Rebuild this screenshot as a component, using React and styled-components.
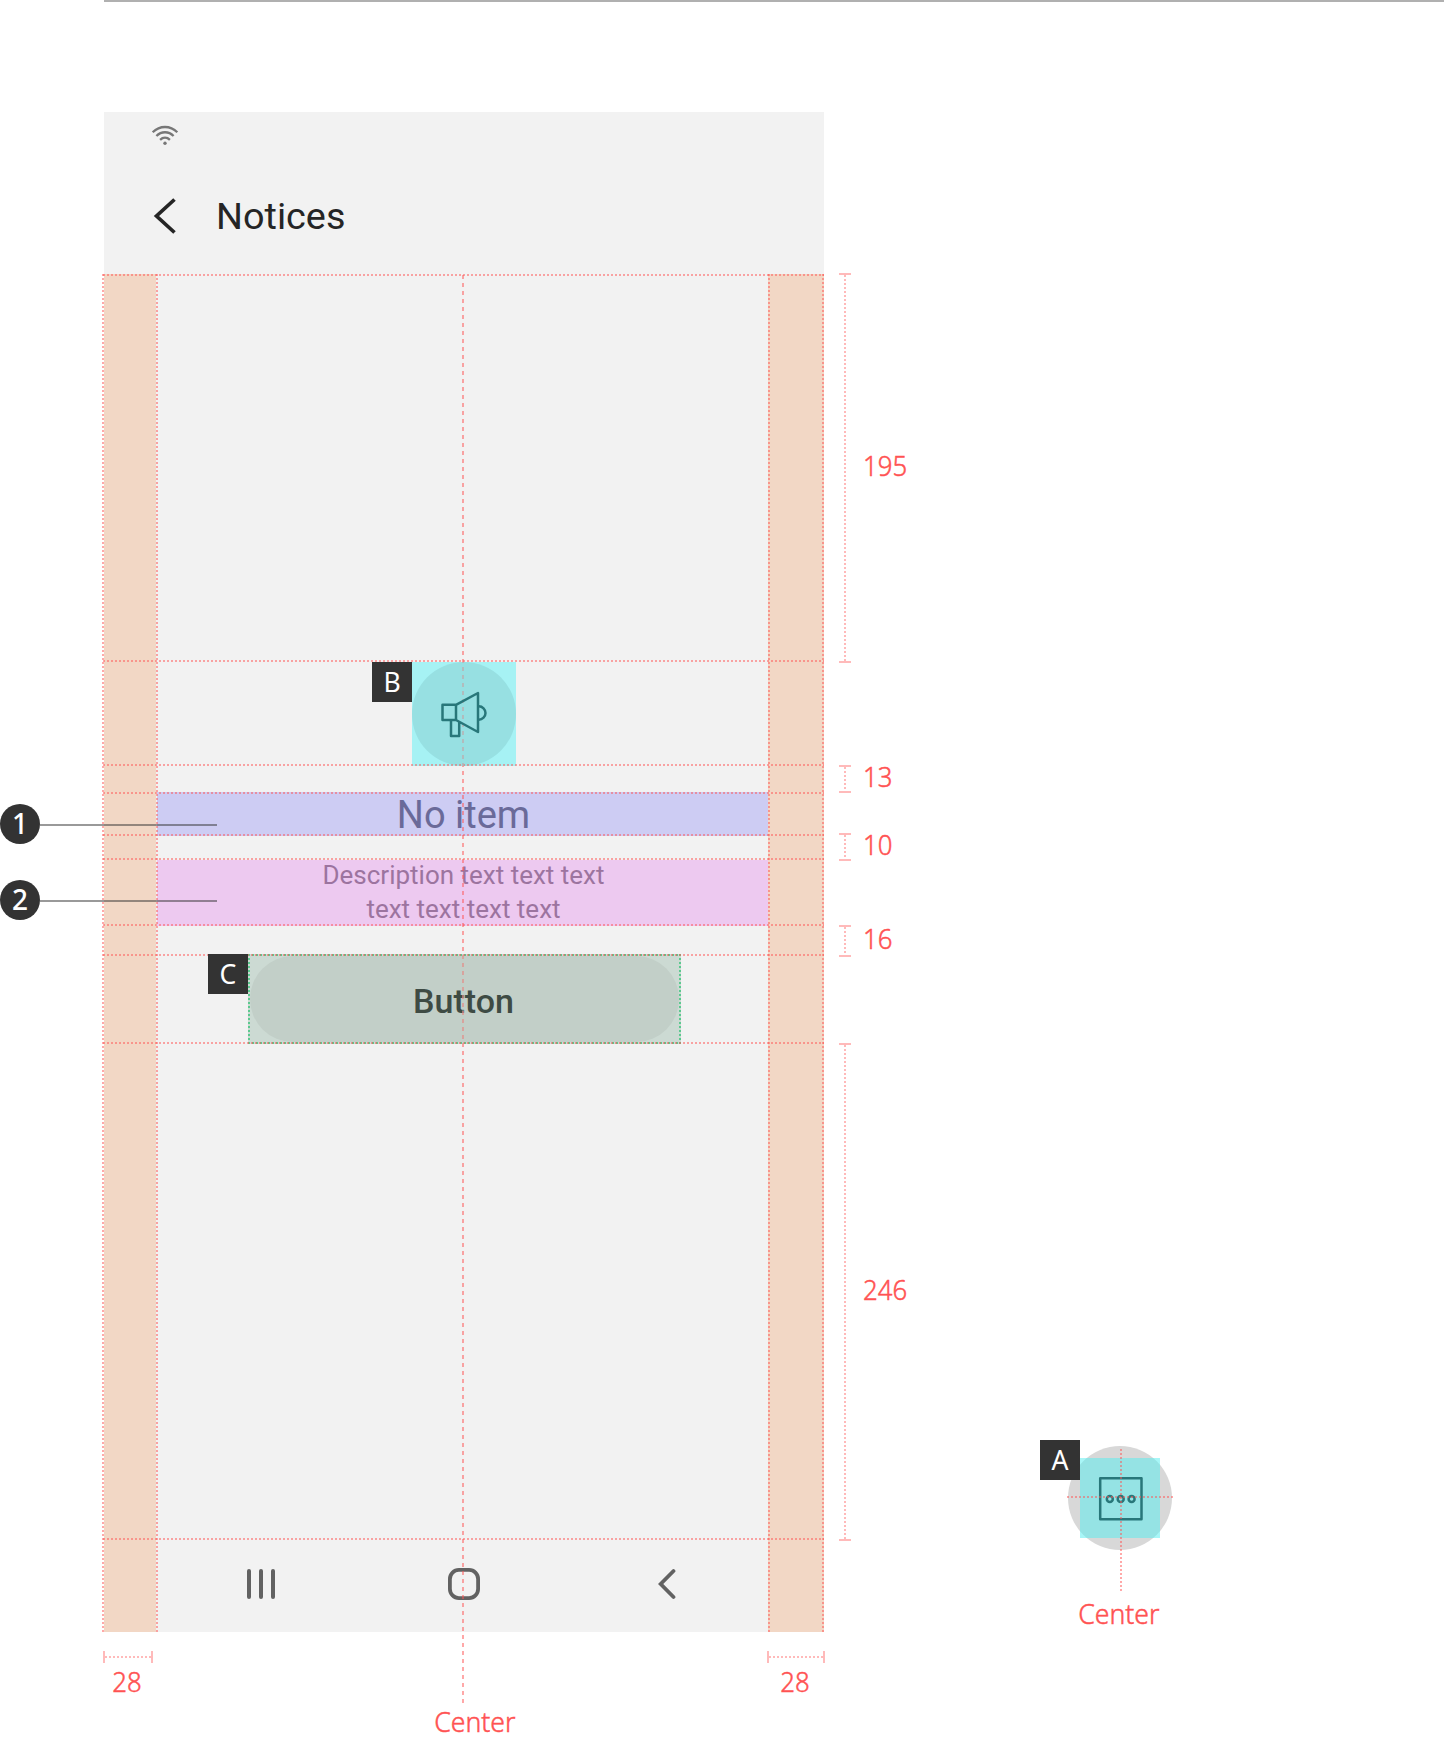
import React from 'react';
import styled, { createGlobalStyle } from 'styled-components';

const RED = 'rgba(255, 82, 82, 0.5)';
const CAP = 'rgba(255, 82, 82, 0.4)';
const GREEN = '#5cc98f';
const dots = (dir, color = RED, on = 2, period = 4) =>
  `repeating-linear-gradient(to ${dir}, ${color} 0 ${on}px, transparent ${on}px ${period}px)`;

const GlobalStyle = createGlobalStyle`
  * { box-sizing: border-box; }
  body { margin: 0; background: #fff; font-family: Roboto, sans-serif; overflow: hidden; }
`;

const Page = styled.div`
  width: 1444px;
  height: 1740px;
  overflow: hidden;
  background: #fff;
`;

const TopRule = styled.div`
  height: 2px;
  margin-left: 104px;
  background: #b0b0b0;
`;

const Board = styled.main`
  display: grid;
  grid-template-columns: 104px 720px 196px 1fr;
  padding-top: 110px;
`;

const Callouts = styled.div`
  display: flex;
  flex-direction: column;
  gap: 36px;
  padding-top: 692px;
  position: relative;
  z-index: 3;
`;

const Callout = styled.div`
  display: flex;
  align-items: center;
  width: 217px;
  height: 40px;
  &::after {
    content: '';
    flex: 1;
    height: 2px;
    margin-top: 2px;
    background: rgba(51, 51, 51, 0.5);
  }
`;

const CalloutNumber = styled.span`
  width: 40px;
  height: 40px;
  border-radius: 50%;
  background: #333;
  color: #fff;
  font: 500 28px/39px 'Noto Sans', 'Open Sans', sans-serif;
  text-align: center;
`;

const PhoneColumn = styled.div`
  display: flex;
  flex-direction: column;
`;

const Phone = styled.section`
  position: relative;
  display: flex;
  flex-direction: column;
  height: 1520px;
  background: #f2f2f2;
`;

const StatusBar = styled.div`
  height: 48px;
  padding: 12px 0 0 47px;
  svg { display: block; }
`;

const AppBar = styled.header`
  display: flex;
  align-items: center;
  height: 114px;
  padding: 0 0 3px 49px;
`;

const Title = styled.h1`
  margin: 0 0 0 39px;
  font: 400 37.8px/44px Roboto, sans-serif;
  color: #252525;
`;

const Body = styled.div`
  position: relative;
  display: grid;
  grid-template-columns: 52px 1fr 56px;
  flex: 1;
`;

const Margin = styled.div`
  background: #f2d7c5;
`;

const Main = styled.div`
  display: flex;
  flex-direction: column;
`;

const Content = styled.div`
  display: flex;
  flex-direction: column;
  align-items: center;
  height: 1264px;
  padding-top: 388px;
`;

const Figure = styled.div`
  position: relative;
  width: 104px;
  height: 104px;
  margin-left: 4px;
  background: #a6f2f4;
`;

const Disc = styled.div`
  display: flex;
  align-items: center;
  justify-content: center;
  width: 104px;
  height: 104px;
  border-radius: 50%;
  background: ${(p) => p.$color};
`;

const Tag = styled.span`
  position: absolute;
  top: ${(p) => p.$top || 0}px;
  left: ${(p) => p.$left ?? -40}px;
  z-index: 2;
  width: 40px;
  height: 40px;
  background: #333;
  color: #fff;
  font: 400 28px/38px 'Noto Sans', 'Open Sans', sans-serif;
  text-align: center;
`;

const TagGlyph = styled.span`
  display: inline-block;
  transform: scaleX(0.95);
`;

const Heading = styled.h2`
  align-self: stretch;
  height: 44px;
  margin: 26px 0 0 1px;
  background: #cdccf3;
  color: #6a6a99;
  font: 400 38px/47px Roboto, sans-serif;
  text-align: center;
  padding-left: 2px;
`;

const Description = styled.p`
  align-self: stretch;
  height: 68px;
  margin: 22px 0 0 1px;
  background: linear-gradient(transparent 2px, #edc9f0 2px);
  color: #9c749f;
  font: 400 26px/34px Roboto, sans-serif;
  text-align: center;
  padding: 0 0 0 2px;
`;

const ButtonArea = styled.div`
  position: relative;
  width: 433px;
  height: 90px;
  margin: 28px 0 0 4px;
  padding: 2px;
  background:
    ${dots('right', GREEN)} 0 0 / 100% 2px no-repeat,
    ${dots('right', GREEN)} 0 100% / 100% 2px no-repeat,
    ${dots('bottom', GREEN)} 0 0 / 2px 100% no-repeat,
    ${dots('bottom', GREEN)} 100% 0 / 2px 100% no-repeat,
    #ccdad3;
`;

const Button = styled.button`
  display: block;
  width: 429px;
  height: 86px;
  border: 0;
  border-radius: 43px;
  padding: 3px 1px 0 0;
  background: #c2cfc8;
  color: #3e4b44;
  font: 500 34px/40px Roboto, sans-serif;
`;

const NavBar = styled.nav`
  display: flex;
  align-items: center;
  height: 92px;
  padding-left: 90px;
`;

const HomeIcon = styled.svg`
  margin: 0 177px 0 171px;
`;

const HLine = styled.i`
  position: absolute;
  left: -1px;
  top: ${(p) => p.$y}px;
  width: 721px;
  height: 2px;
  background: ${dots('right')};
`;

const VLine = styled.i`
  position: absolute;
  top: 0;
  left: ${(p) => p.$x}px;
  width: 2px;
  height: 1359px;
  background: ${dots('bottom')};
`;

const CenterLine = styled.i`
  position: absolute;
  top: 1px;
  left: 358px;
  width: 2px;
  height: 1428px;
  background: ${dots('bottom', RED, 4, 8)};
`;

const Veil = styled.i`
  position: absolute;
  top: 0;
  left: ${(p) => p.$x}px;
  width: 2px;
  height: 100%;
  z-index: 1;
  background: ${(p) => p.$color};
`;

const FigureIcon = styled.svg`
  position: relative;
  z-index: 2;
`;

const Rulers = styled.div`
  display: flex;
  flex-direction: column;
  padding: 161px 0 0 15px;
`;

const Ruler = styled.div`
  display: flex;
  align-items: center;
  height: ${(p) => p.$size}px;
  margin-top: ${(p) => p.$gap}px;
`;

const Scale = styled.span`
  width: 12px;
  height: 100%;
  margin-right: 12px;
  border-top: 2px solid ${CAP};
  border-bottom: 2px solid ${CAP};
  background: ${dots('bottom', CAP)} 5px 0 / 2px 100% no-repeat;
`;

const Value = styled.span`
  display: inline-block;
  font: 300 28px/38px 'Noto Sans', 'Open Sans', sans-serif;
  color: #ff5252;
  -webkit-text-stroke: 0.5px #ff5252;
  transform: scaleX(${(p) => p.$sx || 0.92});
  transform-origin: ${(p) => p.$origin || 'left'} center;
  white-space: nowrap;
`;

const RulerValue = styled(Value)`
  padding-bottom: 6px;
`;

const Footer = styled.div`
  display: flex;
  justify-content: space-between;
  margin: 19px -1px 0;
`;

const Width = styled.div`
  display: flex;
  flex-direction: column;
  align-items: center;
  width: ${(p) => p.$size}px;
`;

const WidthScale = styled.span`
  width: 100%;
  height: 12px;
  margin-bottom: -1px;
  border-left: 2px solid ${CAP};
  border-right: 2px solid ${CAP};
  background: ${dots('right', CAP)} 0 5px / 100% 2px no-repeat;
`;

const WidthValue = styled(Value)`
  margin-right: 2px;
`;

const CenterLabel = styled.div`
  display: flex;
  justify-content: center;
  padding: 51px 0 0 29px;
`;

const IconSpec = styled.div`
  display: flex;
  flex-direction: column;
  align-items: center;
  width: 200px;
  padding-top: 1334px;
`;

const IconLabel = styled(Value)`
  margin: 44px 3px 0 0;
`;

const IconFigure = styled.div`
  position: relative;
  width: 104px;
  height: 104px;
`;

const Keyline = styled.div`
  position: absolute;
  inset: 12px;
  display: flex;
  align-items: center;
  justify-content: center;
  background: rgba(81, 238, 240, 0.5);
`;

const CrossH = styled.i`
  position: absolute;
  left: -1px;
  top: 50px;
  width: 106px;
  height: 2px;
  background: ${dots('right')};
`;

const CrossV = styled.i`
  position: absolute;
  left: 52px;
  top: 3px;
  width: 2px;
  height: 142px;
  background: ${dots('bottom')};
`;

const rulers = [
  { size: 390, gap: 0, label: '195' },
  { size: 28, gap: 102, label: '13' },
  { size: 28, gap: 40, label: '10' },
  { size: 32, gap: 64, label: '16' },
  { size: 498, gap: 86, label: '246' },
];

const lines = [0, 386, 490, 518, 560, 584, 650, 680, 768, 1264];

const Wifi = () => (
  <svg width="28" height="22" viewBox="0 0 28 22" fill="none" stroke="#777" strokeWidth="2.3">
    <path d="M1.7 8.3C8.8 1.2 19.2 1.2 26.3 8.3" />
    <path d="M5.4 12C10.4 7 17.6 7 22.6 12" />
    <path d="M9.1 15.8C12 13 16 13 18.9 15.8" />
    <circle cx="14" cy="19.3" r="1.7" fill="#777" stroke="none" />
  </svg>
);

const Megaphone = () => (
  <FigureIcon width="104" height="104" viewBox="0 0 104 104" fill="none" stroke="#28777a" strokeWidth="2.5" strokeLinejoin="round">
    <path d="M30.5 42.8H44V58H30.5Z M44 42.8L66 31V70L44 58 M39 58V74H47.2V60" />
    <path d="M66 44.3H66.8A6.7 6.7 0 0 1 66.8 57.7H66" />
  </FigureIcon>
);

const MoreBox = () => (
  <svg width="80" height="80" viewBox="0 0 80 80" fill="none" stroke="#28777a" strokeWidth="2.5" strokeLinejoin="round">
    <rect x="20.2" y="20.2" width="41.3" height="41" />
    <circle cx="29.8" cy="41" r="3" />
    <circle cx="40.7" cy="41" r="3" />
    <circle cx="51.6" cy="41" r="3" />
  </svg>
);

export default function App() {
  return (
    <Page>
      <GlobalStyle />
      <TopRule />
      <Board>
        <Callouts>
          <Callout><CalloutNumber>1</CalloutNumber></Callout>
          <Callout><CalloutNumber>2</CalloutNumber></Callout>
        </Callouts>
        <PhoneColumn>
          <Phone>
            <StatusBar><Wifi /></StatusBar>
            <AppBar>
              <svg width="24" height="38" viewBox="0 0 24 38" fill="none" stroke="#252525" strokeWidth="3.7">
                <path d="M21.5 2.5L3.5 19L21.5 35.5" />
              </svg>
              <Title>Notices</Title>
            </AppBar>
            <Body>
              <Margin />
              <Main>
                <Content>
                  <Figure>
                    <Tag><TagGlyph>B</TagGlyph></Tag>
                    <Disc $color="#97e0e2"><Megaphone /></Disc>
                    <Veil $x={50} $color="rgba(151, 224, 226, 0.5)" />
                  </Figure>
                  <Heading>No item</Heading>
                  <Description>Description text text text<br />text text text text</Description>
                  <ButtonArea>
                    <Tag><TagGlyph>C</TagGlyph></Tag>
                    <Button>Button</Button>
                    <Veil $x={214} $color="rgba(194, 207, 200, 0.3)" />
                  </ButtonArea>
                </Content>
                <NavBar>
                  <svg width="30" height="32" viewBox="0 0 30 32" stroke="#626262" strokeWidth="4" strokeLinecap="round">
                    <path d="M3 3V29M15 3V29M27 3V29" />
                  </svg>
                  <HomeIcon width="34" height="34" viewBox="0 0 34 34" fill="none" stroke="#626262" strokeWidth="3.8">
                    <rect x="2.9" y="2.9" width="28.2" height="28.2" rx="9" />
                  </HomeIcon>
                  <svg width="18" height="32" viewBox="0 0 18 32" fill="none" stroke="#626262" strokeWidth="3.8" strokeLinecap="round">
                    <path d="M15.5 3L2.7 16L15.5 29" />
                  </svg>
                </NavBar>
              </Main>
              <Margin />
              {lines.map((y) => <HLine key={y} $y={y} />)}
              {[-2, 52, 664, 718].map((x) => <VLine key={x} $x={x} />)}
              <CenterLine />
            </Body>
          </Phone>
          <Footer>
            <Width $size={50}><WidthScale /><WidthValue $origin="center">28</WidthValue></Width>
            <CenterLabel><Value $origin="center" $sx={0.95}>Center</Value></CenterLabel>
            <Width $size={58}><WidthScale /><WidthValue $origin="center">28</WidthValue></Width>
          </Footer>
        </PhoneColumn>
        <Rulers>
          {rulers.map((r) => (
            <Ruler key={r.label} $size={r.size} $gap={r.gap}>
              <Scale />
              <RulerValue>{r.label}</RulerValue>
            </Ruler>
          ))}
        </Rulers>
        <IconSpec>
          <IconFigure>
            <Tag $top={-6} $left={-28}><TagGlyph>A</TagGlyph></Tag>
            <Disc $color="#d8d8d8" />
            <Keyline><MoreBox /></Keyline>
            <CrossH />
            <CrossV />
          </IconFigure>
          <IconLabel $origin="center" $sx={0.95}>Center</IconLabel>
        </IconSpec>
      </Board>
    </Page>
  );
}
